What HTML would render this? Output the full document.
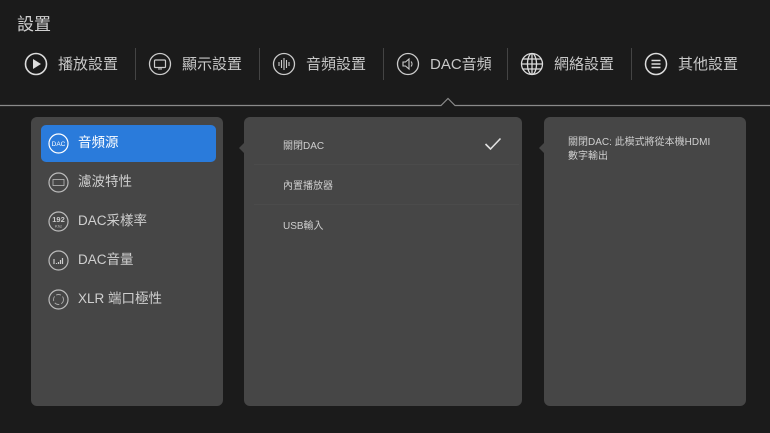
<!DOCTYPE html>
<html><head><meta charset="utf-8"><style>
*{margin:0;padding:0;box-sizing:border-box}
body{width:770px;height:433px;background:#1b1b1b;font-family:"Liberation Sans","Noto Sans CJK TC",sans-serif;color:#c8c8c8;position:relative;overflow:hidden}
.a{position:absolute}
.title{left:17px;top:10px;font-size:17px;color:#d0d0d0}
.tab{top:55px;font-size:15px;color:#c8c8c8;line-height:20px}
.div{top:48px;width:1px;height:32px;background:#444}
.panel{background:#464646;border-radius:6px}
.li{left:78px;font-size:13.5px;color:#cfcfcf;line-height:18px}
.mi{left:283px;font-size:10px;color:#cfcfcf}
.sep{left:254px;width:265px;height:1px;background:#4b4b4b}
svg{position:absolute}
</style></head><body>
<div class="a title">設置</div>

<svg style="left:24px;top:52px" width="24" height="24" viewBox="0 0 24 24"><circle cx="12" cy="12" r="10.5" fill="none" stroke="#ddd" stroke-width="1.6"/><path d="M9 7v10l8-5z" fill="#ddd"/></svg>
<div class="a tab" style="left:58px">播放設置</div>
<div class="a div" style="left:135px"></div>
<svg style="left:148px;top:52px" width="24" height="24" viewBox="0 0 24 24"><circle cx="12" cy="12" r="10.5" fill="none" stroke="#ccc" stroke-width="1.3"/><rect x="6.5" y="8" width="11" height="7.5" rx="1" fill="none" stroke="#ccc" stroke-width="1.2"/><path d="M10 17h4" stroke="#ccc"/></svg>
<div class="a tab" style="left:182px">顯示設置</div>
<div class="a div" style="left:259px"></div>
<svg style="left:272px;top:52px" width="24" height="24" viewBox="0 0 24 24"><circle cx="12" cy="12" r="10.5" fill="none" stroke="#ccc" stroke-width="1.3"/><path d="M7 10v4M9.5 8v8M12 6v12M14.5 8v8M17 10v4" stroke="#ccc" stroke-width="1.1"/></svg>
<div class="a tab" style="left:306px">音頻設置</div>
<div class="a div" style="left:383px"></div>
<svg style="left:396px;top:52px" width="24" height="24" viewBox="0 0 24 24"><circle cx="12" cy="12" r="10.5" fill="none" stroke="#ccc" stroke-width="1.3"/><path d="M7 10h2.5l3.5-3v10l-3.5-3H7z" fill="none" stroke="#ccc" stroke-width="1.1"/><path d="M15 9.5a3.5 3.5 0 0 1 0 5" fill="none" stroke="#ccc"/></svg>
<div class="a tab" style="left:430px">DAC音頻</div>
<div class="a div" style="left:507px"></div>
<svg style="left:520px;top:52px" width="24" height="24" viewBox="0 0 24 24"><g fill="none" stroke="#ddd" stroke-width="1.3"><circle cx="12" cy="12" r="10.5"/><ellipse cx="12" cy="12" rx="4.5" ry="10.5"/><path d="M12 1.5v21M1.5 12h21M3 7h18M3 17h18"/></g></svg>
<div class="a tab" style="left:554px">網絡設置</div>
<div class="a div" style="left:631px"></div>
<svg style="left:644px;top:52px" width="24" height="24" viewBox="0 0 24 24"><circle cx="12" cy="12" r="10.5" fill="none" stroke="#ddd" stroke-width="1.5"/><path d="M7.5 8.5h9M7.5 12h9M7.5 15.5h9" stroke="#ddd" stroke-width="1.5"/></svg>
<div class="a tab" style="left:678px">其他設置</div>

<svg style="left:0;top:96px" width="770" height="12"><path d="M0 9.5H441L448 2.5L455 9.5H770" fill="none" stroke="#8a8a8a" stroke-width="1.2"/></svg>

<div class="a panel" style="left:31px;top:117px;width:192px;height:289px"></div>
<div class="a" style="left:41px;top:125px;width:175px;height:37px;background:#2a7bdb;border-radius:5px"></div>
<svg style="left:48px;top:133px" width="21" height="21" viewBox="0 0 21 21"><circle cx="10.5" cy="10.5" r="9.5" fill="none" stroke="#fff" stroke-width="1.2"/><text x="10.5" y="13" font-size="6.5" fill="#fff" text-anchor="middle" font-family="Liberation Sans">DAC</text></svg>
<div class="a li" style="top:134px;color:#fff">音頻源</div>
<svg style="left:48px;top:172px" width="21" height="21" viewBox="0 0 21 21"><circle cx="10.5" cy="10.5" r="9.5" fill="none" stroke="#bbb" stroke-width="1.2"/><rect x="5" y="7.5" width="11" height="6" fill="none" stroke="#bbb" stroke-width=".8"/></svg>
<div class="a li" style="top:173px">濾波特性</div>
<svg style="left:48px;top:211px" width="21" height="21" viewBox="0 0 21 21"><circle cx="10.5" cy="10.5" r="9.5" fill="none" stroke="#bbb" stroke-width="1.2"/><text x="10.5" y="11" font-size="7.5" font-weight="bold" fill="#ccc" text-anchor="middle" font-family="Liberation Sans">192</text><text x="10.5" y="16.5" font-size="4" fill="#ccc" text-anchor="middle" font-family="Liberation Sans">Khz</text></svg>
<div class="a li" style="top:212px">DAC采樣率</div>
<svg style="left:48px;top:250px" width="21" height="21" viewBox="0 0 21 21"><circle cx="10.5" cy="10.5" r="9.5" fill="none" stroke="#bbb" stroke-width="1.2"/><path d="M6 9v5M8.5 13v1M10.5 12v2M12.5 10v4M14.5 8v6" stroke="#ccc" stroke-width="1.2"/></svg>
<div class="a li" style="top:251px">DAC音量</div>
<svg style="left:48px;top:289px" width="21" height="21" viewBox="0 0 21 21"><circle cx="10.5" cy="10.5" r="9.5" fill="none" stroke="#bbb" stroke-width="1.2"/><circle cx="10.5" cy="10.5" r="5" fill="none" stroke="#aaa" stroke-width=".9" stroke-dasharray="5 2"/></svg>
<div class="a li" style="top:290px">XLR 端口極性</div>

<div class="a panel" style="left:244px;top:117px;width:278px;height:289px"></div>
<svg style="left:238px;top:142px" width="7" height="12"><path d="M7 0L1 6L7 12z" fill="#464646"/></svg>
<div class="a mi" style="top:137px">關閉DAC</div>
<svg style="left:484px;top:137px" width="18" height="14"><path d="M1.5 7l5 5L16.5 1.5" fill="none" stroke="#e0e0e0" stroke-width="1.6"/></svg>
<div class="a sep" style="top:164px"></div>
<div class="a mi" style="top:177px">內置播放器</div>
<div class="a sep" style="top:204px"></div>
<div class="a mi" style="top:217px">USB輸入</div>

<div class="a panel" style="left:544px;top:117px;width:202px;height:289px"></div>
<svg style="left:538px;top:142px" width="7" height="12"><path d="M7 0L1 6L7 12z" fill="#464646"/></svg>
<div class="a" style="left:568px;top:136px;font-size:10px;line-height:14px;color:#cfcfcf;width:170px">關閉DAC: 此模式將從本機HDMI<br>數字輸出</div>
</body></html>
